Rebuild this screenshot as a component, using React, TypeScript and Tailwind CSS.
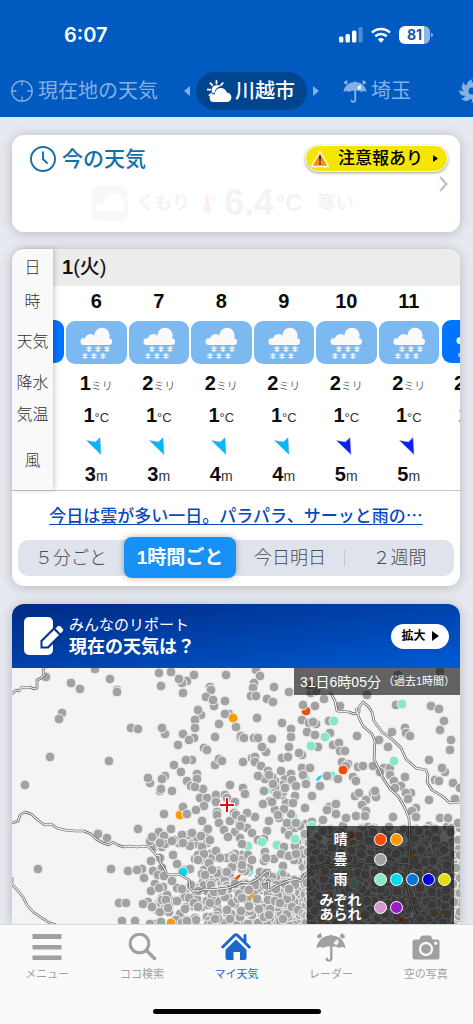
import type { ReactNode } from "react";

type IconProps = { className?: string };

type HourData = {
  hour: number;
  rain: number;
  temp: number;
  wind: number;
};

const hours: HourData[] = [
  { hour: 6, rain: 1, temp: 1, wind: 3 },
  { hour: 7, rain: 2, temp: 1, wind: 3 },
  { hour: 8, rain: 2, temp: 1, wind: 4 },
  { hour: 9, rain: 2, temp: 1, wind: 4 },
  { hour: 10, rain: 2, temp: 1, wind: 5 },
  { hour: 11, rain: 2, temp: 1, wind: 5 },
];

const legend = [
  { label: ["晴"], colors: ["#f24c00", "#ff9900"], row: "h-5" },
  { label: ["曇"], colors: ["#a2a2a2"], row: "h-5" },
  {
    label: ["雨"],
    colors: ["#86e8c9", "#00d8ee", "#0078d7", "#0000d2", "#e0e000"],
    row: "h-5",
  },
  { label: ["みぞれ", "あられ"], colors: ["#d895d2", "#9a1cc8"], row: "h-9" },
];

/* ---------- icons ---------- */

function TargetIcon({ className }: IconProps) {
  return (
    <svg viewBox="0 0 22 22" className={className} fill="none" stroke="currentColor" strokeWidth="1.3" aria-hidden="true">
      <circle cx="11" cy="11" r="10.2" />
      <path d="M11 1v4.5M11 16.5V21M1 11h4.5M16.5 11H21" />
    </svg>
  );
}

function SunCloudIcon({ className }: IconProps) {
  return (
    <svg viewBox="0 0 25 22" className={className} fill="currentColor" aria-hidden="true">
      <path
        d="M9.5 .8v2.8M3.4 3.2l1.8 2M.6 9.6h2.7M2.4 15.4l1.8-1.6M15.8 3.2l-1.8 2"
        stroke="currentColor"
        strokeWidth="1.8"
        strokeLinecap="round"
      />
      <path d="M9.4 5.2a4.9 4.9 0 0 0-3.6 8.2l2-.9c.2-3.2 2.6-5.7 5.9-6A4.8 4.8 0 0 0 9.4 5.2z" />
      <path d="M6.3 22a4 4 0 0 1-.4-7.9c.7.1 1.2.2 1.8.5.3-3.9 2.6-6.6 6.2-6.600 3 0 5.200 1.700 5.900 4.600 2.700.2 4.600 2.200 4.600 4.800 0 2.600-2 4.600-4.600 4.600z" />
    </svg>
  );
}

function UmbrellaIcon({ className }: IconProps) {
  return (
    <svg viewBox="0 0 30 29" className={className} fill="currentColor" aria-hidden="true">
      <path d="M.6 15.4C1.2 8.500 6 3.400 13.800 2.600L15 1.200l1.200 1.400C24 3.400 28.800 8.500 29.400 15.400c-2-1.800-4.600-1.900-6.600-.4-1.600-1.300-4.200-1.800-6.300-1.300v11.500c0 4.600-6.700 4.800-7 .3 0-1.300 2.200-1.300 2.300 0 .2 1.700 2.300 1.500 2.300-.3V13.700c-2.400-.5-5 0-6.900 1.300-2-1.500-4.600-1.400-6.600.4z" />
      <path d="M4.800 0c1.400 2.500 1.400 5-.8 5.400C1.600 5.800.2 3.600 1.700 2 2.400 1.200 3.800 1 4.800 0zM25.200 0c-1.400 2.500-1.400 5 .8 5.400 2.400.4 3.800-1.800 2.300-3.400-.7-.8-2.100-1-3.100-2z" />
      <path d="M21.600 6c1.500 2.600 1.300 5.600-1 6-2.200.3-3.400-1.700-2.200-3.400.8-1 2.200-1.100 3.200-2.600z" fill="#fff" fillOpacity=".85" />
    </svg>
  );
}

function TyphoonIcon({ className }: IconProps) {
  return (
    <svg viewBox="0 0 26 24" className={className} aria-hidden="true">
      <circle cx="13" cy="12" r="6" fill="none" stroke="currentColor" strokeWidth="5" />
      <g fill="currentColor">
        <path d="M8 6C8 3 10 1 14 0c-1 1-1.500 2.200-1 4z" />
        <path d="M4 12C2 9 2.500 6 5 3c-.2 1.500.3 2.500 2 3.500z" />
        <path d="M6 17C2 17 .3 14 0 11c1.200 1 2.500 1.400 4.500.8z" />
        <path d="M11 20.500C8 23 4.500 22 2 19.500c1.700.1 3-.5 4-2.500z" />
        <path d="M18 18c0 3-2 5-6 6 1-1 1.500-2.200 1-4z" />
        <path d="M22 12c2 3 1.500 6-1 9 .2-1.500-.3-2.500-2-3.500z" />
        <path d="M20 7c4 0 5.700 3 6 6-1.200-1-2.500-1.400-4.500-.8z" />
        <path d="M15 3.500c3-2.500 6.500-1.500 9 1-1.700-.1-3 .5-4 2.500z" />
      </g>
    </svg>
  );
}

function StatusIcons() {
  return (
    <div className="flex items-center gap-2 text-white">
      <svg viewBox="0 0 24 16" className="h-4 w-6" fill="currentColor" aria-hidden="true">
        <rect x="0" y="9.5" width="4.4" height="6" rx="1.5" />
        <rect x="6.5" y="7" width="4.4" height="8.5" rx="1.5" />
        <rect x="13" y="3.5" width="4.4" height="12" rx="1.5" />
        <rect x="19.5" y="0" width="4.2" height="15.5" rx="1.5" opacity=".3" />
      </svg>
      <svg viewBox="0 0 20 16" className="h-4 w-5" fill="none" stroke="currentColor" strokeWidth="2.6" aria-hidden="true">
        <path d="M1 5.600a13 13 0 0 1 18 0" />
        <path d="M4.300 9.300a8.200 8.200 0 0 1 11.400 0" />
        <path d="M10 15.800l-3.200-3.400a4.800 4.800 0 0 1 6.400 0z" fill="currentColor" stroke="none" />
      </svg>
      <div className="flex items-center">
        <div className="flex h-[18px] w-[31px] items-center justify-center rounded-md bg-linear-to-r from-white from-80% to-[#8fb5e3] to-80% font-['Inter',sans-serif] text-[14px] leading-none font-bold text-[#1558ae]">
          81
        </div>
        <div className="ml-px h-1 w-0.5 rounded-r bg-[#8fb5e3]" />
      </div>
    </div>
  );
}

function ClockIcon({ className }: IconProps) {
  return (
    <svg viewBox="0 0 26 26" className={className} fill="none" stroke="currentColor" strokeWidth="1.9" aria-hidden="true">
      <circle cx="13" cy="13" r="12" />
      <path d="M13 5.500V13l4.600 4.600" />
    </svg>
  );
}

function SnowCloudIcon({ className }: IconProps) {
  const flakes = [
    [23, 28],
    [32, 28],
    [41, 28],
    [19, 35],
    [28, 35],
    [37, 35],
  ];
  return (
    <svg viewBox="0 0 60 43" className={className} aria-hidden="true">
      <g fill="#fafafa">
        <rect x="14.500" y="17.300" width="31.500" height="6.700" rx="3.300" />
        <circle cx="24.500" cy="18.500" r="5.500" />
        <circle cx="36" cy="14.500" r="7.700" />
        <path d="M24 13l8 5v4h-8z" />
      </g>
      <g stroke="#fafafa" strokeWidth="1.300">
        {flakes.map(([x, y]) => (
          <path
            key={`${x}-${y}`}
            transform={`translate(${x} ${y})`}
            d="M0-3V3M-2.600-1.500L2.600 1.500M2.600-1.500L-2.600 1.500"
          />
        ))}
      </g>
    </svg>
  );
}

function WindArrow({ strong }: { strong: boolean }) {
  return (
    <svg viewBox="0 0 16 18" className="mr-1 h-[18px] w-4 shrink-0" aria-hidden="true">
      <path
        d="M15 17.500L.5 3.500l9 1.500L14 .5z"
        fill={strong ? "#0a1eff" : "#00b8ff"}
        stroke="#999"
        strokeWidth=".4"
      />
    </svg>
  );
}

function ReportIcon({ className }: IconProps) {
  return (
    <svg viewBox="0 0 40 38" className={className} aria-hidden="true">
      <rect x="0" y="0" width="29" height="38" rx="5" fill="#fff" />
      <path d="M16.500 31.500v-8L33 7l8 8-16.500 16.500z" fill="#003193" />
      <path d="M18.500 29.500v-5L30 13l5 5-11.500 11.500z" fill="#fff" />
      <path d="M31.500 11.500l2-2c1-1 2-1 3 0l2 2c1 1 1 2 0 3l-2 2z" fill="#fff" />
    </svg>
  );
}

function Triangle({ className }: IconProps) {
  return (
    <svg viewBox="0 0 6 10" preserveAspectRatio="none" className={className} fill="currentColor" aria-hidden="true">
      <path d="M0 0l6 5-6 5z" />
    </svg>
  );
}

/* ---------- report map ---------- */

const cloudy: number[][] = [
  [83, 1], [34, 9], [59, 15], [68, 21], [98, 11], [105, 22], [105, 24], [50, 45], [47, 51], [38, 89],
  [97, 93], [13, 117], [119, 60], [126, 61], [147, 5], [159, 4], [149, 18], [171, 25], [175, 13], [170, 15],
  [167, 11], [182, 7], [214, 7], [198, 19], [199, 22], [194, 29], [202, 38], [201, 32], [213, 33], [189, 47],
  [186, 42], [183, 52], [183, 60], [217, 46], [213, 46], [207, 56], [224, 59], [153, 66], [150, 60], [171, 66],
  [182, 70], [177, 72], [166, 77], [203, 69], [228, 69], [192, 80], [195, 82], [180, 92], [174, 92], [203, 97],
  [207, 91], [210, 93], [162, 97], [169, 104], [138, 115], [136, 110], [153, 108], [150, 111], [185, 106], [175, 113],
  [185, 111], [148, 123], [149, 121], [160, 123], [179, 118], [191, 121], [183, 119], [218, 117], [188, 130], [195, 130],
  [204, 127], [213, 127], [215, 130], [192, 138], [184, 142], [204, 134], [223, 134], [171, 139], [175, 146], [152, 146],
  [205, 144], [205, 147], [222, 145], [190, 153], [207, 155], [218, 153], [194, 164], [196, 161], [212, 162], [223, 164],
  [126, 161], [86, 166], [95, 170], [159, 161], [147, 164], [138, 173], [140, 169], [152, 168], [150, 179], [153, 176],
  [148, 175], [160, 173], [170, 167], [185, 169], [180, 165], [189, 168], [198, 172], [178, 178], [171, 175], [190, 179],
  [216, 169], [228, 170], [161, 187], [148, 190], [139, 193], [165, 196], [183, 191], [186, 187], [192, 186], [204, 183],
  [186, 192], [215, 190], [208, 190], [221, 190], [197, 195], [205, 205], [200, 202], [193, 207], [178, 201], [215, 204],
  [26, 201], [99, 201], [116, 203], [130, 201], [125, 202], [132, 210], [141, 203], [146, 207], [152, 208], [160, 213],
  [139, 223], [151, 219], [147, 220], [170, 221], [107, 235], [114, 235], [136, 234], [131, 236], [140, 239], [150, 232],
  [154, 232], [165, 233], [156, 240], [110, 253], [123, 253], [149, 254], [138, 256],
  [244, 2], [248, 8], [242, 15], [241, 20], [239, 28], [244, 28], [262, 19], [255, 31], [261, 34], [277, 24],
  [291, 37], [303, 38], [312, 31], [299, 25], [304, 23], [298, 18], [328, 38], [245, 50], [270, 55], [279, 61],
  [290, 52], [297, 55], [304, 56], [301, 54], [317, 53], [345, 68], [229, 68], [232, 70], [242, 70], [246, 70],
  [260, 71], [254, 84], [250, 79], [279, 69], [277, 79], [290, 87], [287, 85], [295, 64], [303, 67], [306, 79],
  [318, 65], [321, 77], [327, 75], [328, 83], [333, 83], [270, 90], [276, 89], [231, 94], [240, 90], [243, 89],
  [243, 94], [249, 98], [256, 103], [269, 103], [260, 109], [253, 111], [257, 107], [246, 108], [290, 100], [298, 100],
  [291, 107], [294, 116], [308, 118], [315, 108], [326, 111], [330, 94], [336, 96], [334, 98], [346, 99], [351, 98],
  [361, 98], [341, 109], [344, 113], [355, 27], [384, 37], [419, 38], [427, 41], [432, 53], [428, 62], [439, 72],
  [438, 82], [380, 64], [393, 60], [394, 65], [398, 68], [367, 72], [376, 79], [417, 92], [433, 104], [430, 100],
  [423, 112], [427, 113], [441, 115], [448, 120], [393, 109], [417, 132], [443, 131], [372, 100], [378, 100], [368, 104],
  [378, 107], [382, 113], [389, 118], [383, 120], [399, 125], [394, 125], [231, 120], [233, 126], [252, 123], [263, 119],
  [261, 116], [273, 120], [265, 127], [283, 128], [300, 128], [343, 128], [347, 125], [361, 125], [364, 129], [363, 123],
  [354, 132], [317, 139], [315, 142], [324, 136], [324, 146], [251, 136], [260, 134], [272, 141], [281, 135], [293, 140],
  [266, 147], [350, 137], [344, 148], [354, 143], [353, 148], [381, 149], [404, 140], [400, 143], [404, 149], [428, 150],
  [436, 150], [446, 155], [243, 149], [235, 145], [224, 147], [230, 151], [235, 160], [275, 155], [284, 155], [300, 154],
  [311, 152], [280, 112], [284, 118], [386, 7], [428, 4], [334, 150], [396, 131], [240, 165], [246, 172], [228, 158],
  [253, 184], [254, 190], [269, 186], [283, 178], [277, 188], [284, 186], [230, 176], [222, 190], [240, 192],
];

// x, y, width, height, count
const clusters: number[][] = [
  [136, 166, 60, 40, 16],
  [140, 214, 70, 44, 60],
  [190, 186, 110, 30, 55],
  [195, 212, 105, 46, 240],
  [252, 100, 28, 72, 20],
  [270, 152, 28, 36, 20],
  [300, 158, 148, 30, 140],
  [292, 180, 160, 78, 620],
];

const colored: { x: number; y: number; fill: string }[] = [
  { x: 221, y: 50, fill: "#ff9900" },
  { x: 171, y: 204, fill: "#00d8ee" },
  { x: 159, y: 255, fill: "#ff9900" },
  { x: 322, y: 53, fill: "#86e8c9" },
  { x: 313, y: 69, fill: "#86e8c9" },
  { x: 299, y: 78, fill: "#86e8c9" },
  { x: 331, y: 102, fill: "#f24c00" },
  { x: 390, y: 36, fill: "#86e8c9" },
  { x: 382, y: 93, fill: "#86e8c9" },
  { x: 250, y: 174, fill: "#86e8c9" },
  { x: 283, y: 171, fill: "#86e8c9" },
  { x: 300, y: 158, fill: "#86e8c9" },
  { x: 342, y: 216, fill: "#86e8c9" },
];

// reports mostly hidden under their neighbours
const covered: { x: number; y: number; fill: string }[] = [
  { x: 168, y: 147, fill: "#ff9900" },
  { x: 294, y: 43, fill: "#f24c00" },
  { x: 293, y: 110, fill: "#86e8c9" },
  { x: 261, y: 122, fill: "#86e8c9" },
  { x: 320, y: 108, fill: "#86e8c9" },
  { x: 226, y: 152, fill: "#86e8c9" },
  { x: 281, y: 149, fill: "#86e8c9" },
  { x: 236, y: 178, fill: "#86e8c9" },
  { x: 265, y: 177, fill: "#86e8c9" },
  { x: 295, y: 160, fill: "#f24c00" },
];

// small slivers still visible between the grey dots
const slivers: { x: number; y: number; fill: string }[] = [
  { x: 307, y: 110, fill: "#00d8ee" },
  { x: 226, y: 209, fill: "#f24c00" },
  { x: 240, y: 228, fill: "#ff9900" },
  { x: 267, y: 204, fill: "#86e8c9" },
  { x: 239, y: 206, fill: "#86e8c9" },
  { x: 340, y: 168, fill: "#f24c00" },
  { x: 400, y: 187, fill: "#ff9900" },
  { x: 388, y: 190, fill: "#86e8c9" },
  { x: 430, y: 244, fill: "#ff9900" },
  { x: 389, y: 252, fill: "#f24c00" },
  { x: 309, y: 254, fill: "#ff9900" },
];

const borders = [
  "M0 26l4-4 3 1 3-4 4 1 4-1 4 2 3-1v-8l4-2 3-3-1-5 2-3",
  "M0 155l6-2 2-6 5-3 6 2 8 7 6 4 6-1 6 4 8 2 10 1 9 0 7 3 5 5 7 4 6 2 4-3 5 3 6 2 5-1 8 1 6-1 6 1 4 4 3 4 4 1 0 6 4 6 3 6 6 1 6-1 5 3 5 3 1 8 3 3 6 0 5-2 8 1 7-1 9-1 8-3 6-3 8 1 8-4 6-6 5-3 1 5-7 8 6-2-1 10 10-6 10-4 8-2 5 2 4-7 9-6 12-4 10 3 14 1 10-6 12 2 12-4 14 3 12 1 12 4",
  "M0 209l0 7 6 7 5 6 4 8 6 7 9 6 8 5 9 3",
  "M318 24l5 9 2 10 12 1 5 2 5-2 0-5 4-5 5 4 4 6 2 9 8 11 11 8 8 8 5 11 10 9 10 2 2 5-1 7 5 8 10 6 8 7 10-1",
  "M344 40l3 10 4 8 9 8 3 7-1 18 4 8 5 11 7 11 8 7 6 10 5 12 1 26-2 24-1 16 4 16 6 18 8 14",
];

function scatter() {
  let seed = 607;
  const next = () => {
    seed = (seed * 1103515245 + 12345) % 2147483648;
    return seed / 2147483648;
  };
  return clusters.flatMap(([x, y, w, h, count]) =>
    Array.from({ length: count }, () => [
      Math.round(x + next() * w),
      Math.round(y + next() * h),
    ]),
  );
}

const scattered = scatter();

function Dot({ x, y, fill = "#a2a2a2" }: { x: number; y: number; fill?: string }) {
  return <circle cx={x} cy={y} r="4.900" fill={fill} stroke="#f2f2f2" strokeWidth="1" />;
}

function ReportMap() {
  return (
    <svg
      viewBox="0 0 448 256"
      preserveAspectRatio="xMidYMin slice"
      className="absolute inset-0 h-full w-full bg-[#f4f4f4]"
      role="img"
      aria-label="現在の天気の地図"
    >
      {covered.map((d) => (
        <Dot key={`${d.x}-${d.y}`} {...d} />
      ))}
      {scattered.map(([x, y], i) => (
        <Dot key={i} x={x} y={y} />
      ))}
      {cloudy.map(([x, y], i) => (
        <Dot key={i} x={x} y={y} />
      ))}
      {colored.map((d) => (
        <Dot key={`${d.x}-${d.y}`} {...d} />
      ))}
      {slivers.map((d) => (
        <path key={`${d.x}-${d.y}`} d="M-3 2C-2-1 0-2 3-3 2 0 1 2-2 3z" transform={`translate(${d.x} ${d.y})`} fill={d.fill} />
      ))}
      <g fill="none" strokeLinejoin="round">
        {borders.map((d) => (
          <path key={d} d={d} stroke="#5a5a5a" strokeWidth="2.600" />
        ))}
        {borders.map((d) => (
          <path key={d} d={d} stroke="#ededed" strokeWidth="1.300" />
        ))}
      </g>
      <path d="M215 129v16M207 137h16" stroke="#fff" strokeWidth="4" />
      <path d="M215 130v14M208 137h14" stroke="#f5001d" strokeWidth="2" />
    </svg>
  );
}

/* ---------- sections ---------- */

function Header() {
  return (
    <header className="h-[117px] shrink-0 overflow-hidden bg-[#005ac0]">
      <div className="flex h-[70px] items-center justify-between pr-10 pl-16">
        <span className="font-['Inter',sans-serif] text-[20px] leading-none font-semibold text-white">
          6:07
        </span>
        <StatusIcons />
      </div>
      <nav className="flex h-[42px] items-center text-[20px] leading-none whitespace-nowrap text-[#86b0e2]">
        <a href="#here" className="ml-[11px] flex shrink-0 items-center gap-[5px]">
          <TargetIcon className="size-[22px]" />
          現在地の天気
        </a>
        <Triangle className="ml-[26px] h-2.5 w-1.5 shrink-0 rotate-180" />
        <a
          href="#kawagoe"
          aria-current="page"
          className="ml-1.5 flex h-[38px] shrink-0 items-center gap-[3px] rounded-full bg-[#02458f] pr-3 pl-[11px] font-medium text-white"
        >
          <SunCloudIcon className="h-[22px] w-[25px]" />
          川越市
        </a>
        <Triangle className="ml-1.5 h-2.5 w-1.5 shrink-0" />
        <a href="#saitama" className="ml-6 flex shrink-0 items-center gap-1">
          <UmbrellaIcon className="h-[23px] w-6" />
          埼玉
        </a>
        <a href="#typhoon" aria-label="台風" className="ml-12 shrink-0">
          <TyphoonIcon className="h-6 w-[26px]" />
        </a>
      </nav>
    </header>
  );
}

function Card({ className, children }: { className?: string; children: ReactNode }) {
  return (
    <section className={`rounded-xl bg-white shadow-[0_1px_12px_rgba(0,0,0,0.22)] ${className ?? ""}`}>
      {children}
    </section>
  );
}

function CurrentWeather() {
  return (
    <Card className="h-[97px] shrink-0 pt-2.5 pr-3 pl-[18px]">
      <div className="flex items-start justify-between">
        <h2 className="flex items-center gap-1.5 text-[21px] leading-7 font-medium text-[#1470ab]">
          <ClockIcon className="size-[26px]" />
          今の天気
        </h2>
        <button className="flex h-[27px] w-[143px] items-center rounded-full border border-white bg-[#f5e600] pl-1 text-[17px] leading-none font-medium text-black shadow-[0_1px_3px_rgba(0,0,0,0.4)]">
          <svg viewBox="0 0 20 18" className="h-[18px] w-5" aria-hidden="true">
            <path d="M10 1.500L18.500 16.500h-17z" fill="#ff8c0f" stroke="#fff" strokeWidth="1.500" strokeLinejoin="round" />
            <path d="M9 6h2l-.4 5.500H9.400zM9.100 12.800h1.800v1.700H9.100z" fill="#222" />
          </svg>
          <span className="ml-2">注意報あり</span>
          <Triangle className="ml-2.5 h-[7px] w-[5px]" />
        </button>
      </div>
      <div className="flex items-start">
        <div className="mt-3 flex flex-1 items-center pl-[62px] text-[18px] leading-9 font-bold text-[#f3f3f3]">
          <svg viewBox="0 0 36 36" className="size-9" aria-hidden="true">
            <rect width="36" height="36" rx="8" fill="#f8f8f8" />
            <path d="M6 26a3.500 3.500 0 0 1-1-6c4-.5 7-2 8-4 1-5 4-8 8.500-8 5 0 8.500 4 8 9 1 2 3 3 3 6 0 2-1 3-3 3z" fill="#fff" />
          </svg>
          <span className="ml-2">くもり</span>
          <svg viewBox="0 0 14 18" className="ml-3 h-[18px] w-3.5" aria-hidden="true">
            <path d="M3 3a2 2 0 0 1 4 0v8a4 4 0 1 1-4 0z" fill="#fdeeee" />
            <path d="M9 3h5M9 6h4M9 9h5" stroke="#fdeeee" />
          </svg>
          <span className="ml-2 text-[36px]">6.4</span>
          <span className="ml-0.5 text-[23px]">°C</span>
          <span className="ml-4">寒い</span>
        </div>
        <svg viewBox="0 0 9 16" className="mt-[3px] h-4 w-[9px]" fill="none" stroke="#c2c2c6" strokeWidth="2.200" aria-hidden="true">
          <path d="M1 1l6.500 7L1 15" />
        </svg>
      </div>
    </Card>
  );
}

function RowLabels() {
  return (
    <div className="relative z-10 flex w-[41px] shrink-0 flex-col rounded-tl-xl bg-[#f9f9f9] text-center text-[16px] font-light text-[#333] shadow-[2px_0_5px_rgba(0,0,0,0.18)]">
      <span className="leading-[37px]">日</span>
      <span className="leading-[31px]">時</span>
      <span className="leading-[50px]">天気</span>
      <span className="leading-[32px]">降水</span>
      <span className="leading-[32px]">気温</span>
      <span className="leading-[59px]">風</span>
    </div>
  );
}

function HourColumn({ data }: { data: HourData }) {
  return (
    <div className="flex min-w-0 flex-1 flex-col items-center text-[20px] font-bold text-[#0c0c0c]">
      <span className="leading-[31px]">{data.hour}</span>
      <div className="flex h-[50px] w-full items-center px-px">
        <div className="flex h-[43px] w-full justify-center rounded-[9px] bg-[#7cb9f1]">
          <SnowCloudIcon className="h-[43px] w-[60px]" />
        </div>
      </div>
      <span className="flex h-8 items-baseline leading-8">
        {data.rain}
        <small className="text-[11px] font-light">ミリ</small>
      </span>
      <span className="flex h-8 items-baseline leading-8">
        {data.temp}
        <small className="text-[13px] font-normal text-[#333]">°C</small>
      </span>
      <div className="flex h-[59px] flex-col items-center pt-1.5">
        <WindArrow strong={data.wind >= 5} />
        <span className="flex shrink-0 items-baseline leading-[38px]">
          {data.wind}
          <small className="text-[14px] font-normal text-[#333]">m</small>
        </span>
      </div>
    </div>
  );
}

function Forecast() {
  return (
    <Card className="mt-[17px] shrink-0 pb-1.5">
      <div className="flex border-b border-[#c6c6c6]">
        <RowLabels />
        <div className="min-w-0 flex-1 overflow-hidden rounded-tr-xl">
          <h3 className="bg-[#ececec] pl-[9px] text-[20px] leading-[37px] font-bold text-[#111]">
            1<span className="font-medium">(火)</span>
          </h3>
          <div className="flex">
            <div className="w-3 shrink-0 pt-[34px]">
              <div className="mr-px h-[43px] rounded-r-[9px] bg-[#0073ff]" />
            </div>
            {hours.map((data) => (
              <HourColumn key={data.hour} data={data} />
            ))}
            <div className="w-5 shrink-0 overflow-hidden pt-[34px] pl-0.5 text-[20px] font-bold whitespace-nowrap">
              <div className="h-[43px] w-[60px] rounded-l-[9px] bg-[#0073ff]">
                <SnowCloudIcon className="h-[43px] w-[60px]" />
              </div>
              <p className="mt-1 pl-3 leading-8">2</p>
              <p className="pl-4 leading-8 font-normal text-[#999]">2</p>
            </div>
          </div>
        </div>
      </div>
      <a
        href="#comment"
        className="mt-2 block text-center font-['Noto_Sans_CJK_JP',sans-serif] text-[17px] leading-8 font-medium text-[#0b49bb] underline underline-offset-2"
      >
        今日は雲が多い一日。パラパラ、サーッと雨の…
      </a>
      <div className="mx-1.5 mt-1.5 mb-0.5 flex h-[41px] items-center">
        <div className="flex h-9 w-full items-center rounded-[10px] bg-[#dfe3eb] text-[18px] leading-none whitespace-nowrap text-[#4c4c4c]">
          <button className="flex-[106] font-light">５分ごと</button>
          <button className="h-[41px] flex-[112] rounded-lg bg-[#1791f5] text-[19px] font-bold text-white shadow-[0_0_6px_rgba(0,0,0,0.3)]">
            1時間ごと
          </button>
          <button className="flex-[108] font-light">今日明日</button>
          <div className="h-4 w-px bg-[#c3c7cf]" />
          <button className="flex-[109] font-light">２週間</button>
        </div>
      </div>
    </Card>
  );
}

function MapLegend() {
  return (
    <div className="absolute top-[158px] right-1.5 bottom-0 w-[147px] overflow-hidden bg-black/65 pt-[3px] text-white">
      {legend.map((item) => (
        <div key={item.label[0]} className={`flex items-center ${item.row}`}>
          <div className="w-[67px] pb-px text-center text-[14px] leading-[14px] font-bold">
            {item.label.map((line) => (
              <div key={line}>{line}</div>
            ))}
          </div>
          <div className="flex gap-[3px]">
            {item.colors.map((color) => (
              <span
                key={color}
                className="size-[13px] rounded-full border border-white"
                style={{ backgroundColor: color }}
              />
            ))}
          </div>
        </div>
      ))}
    </div>
  );
}

function Reports() {
  return (
    <Card className="mt-[18px] flex min-h-0 flex-1 flex-col overflow-hidden rounded-b-none">
      <div className="flex h-16 shrink-0 items-center bg-linear-to-br from-[#002a85] to-[#005bd3] pr-[11px] pl-3 text-white">
        <ReportIcon className="h-[38px] w-10" />
        <h2 className="ml-[5px] flex-1">
          <span className="block text-[15px] leading-[22px] font-normal">みんなのリポート</span>
          <span className="block text-[18px] leading-[22px] font-bold">現在の天気は？</span>
        </h2>
        <button className="flex h-[25px] w-[58px] items-center justify-center gap-1.5 rounded-full bg-white text-[12px] leading-none font-bold text-black">
          拡大
          <Triangle className="h-2.5 w-[7px]" />
        </button>
      </div>
      <div className="relative min-h-0 flex-1">
        <ReportMap />
        <p className="absolute top-0 right-0 flex h-[27px] w-[166px] items-center bg-black/60 pl-1.5 text-[14px] leading-none whitespace-nowrap text-white">
          31日6時05分<small className="ml-0.5 text-[11px]">（過去1時間）</small>
        </p>
        <MapLegend />
      </div>
    </Card>
  );
}

const navItems = [
  {
    label: "メニュー",
    icon: (
      <svg viewBox="0 0 30 28" className="h-7 w-[30px]" fill="currentColor" aria-hidden="true">
        <path d="M.5 1h29v5H.5zM.5 12h29v4.500H.5zM.5 22.500h29V27H.5z" />
      </svg>
    ),
  },
  {
    label: "ココ検索",
    icon: (
      <svg viewBox="0 0 30 28" className="h-7 w-[30px]" fill="none" stroke="currentColor" aria-hidden="true">
        <circle cx="12.500" cy="10.500" r="9.300" strokeWidth="3" />
        <path d="M19.500 17.500l8 8" strokeWidth="3.600" strokeLinecap="round" />
      </svg>
    ),
  },
  {
    label: "マイ天気",
    active: true,
    icon: (
      <svg viewBox="0 0 30 28" className="h-7 w-[30px]" aria-hidden="true">
        <path
          d="M1.700 14L13.500 2.400q1.500-1.300 3 0L28.300 14M24 2.500v7"
          fill="none"
          stroke="currentColor"
          strokeWidth="2.900"
          strokeLinecap="round"
        />
        <path d="M15 6.500l10.500 10.200V25q0 2-2 2H19v-8h-6.500v8H6.500q-2 0-2-2v-8.300z" fill="currentColor" />
      </svg>
    ),
  },
  { label: "レーダー", icon: <UmbrellaIcon className="h-[29px] w-[30px]" /> },
  {
    label: "空の写真",
    icon: (
      <svg viewBox="0 0 30 28" className="h-7 w-[30px]" aria-hidden="true">
        <path
          d="M8.500 6.500l1-2.500q.5-1.500 2-1.500h7q1.500 0 2 1.500l1 2.500H26q2.500 0 2.500 2.500v15q0 2.500-2.500 2.500H4q-2.500 0-2.500-2.500V9q0-2.500 2.500-2.500z"
          fill="currentColor"
        />
        <circle cx="15" cy="16" r="6" fill="none" stroke="#fafafa" strokeWidth="2.300" />
        <circle cx="24.700" cy="10.300" r="1.700" fill="#fafafa" />
      </svg>
    ),
  },
];

function BottomNav() {
  return (
    <footer className="relative z-20 h-[100px] shrink-0 border-t border-[#d8d8da] bg-[#fafafa]">
      <nav className="flex pt-2">
        {navItems.map(({ label, icon, active }) => (
          <a
            key={label}
            href={`#${label}`}
            aria-current={active ? "page" : undefined}
            className={`flex flex-1 flex-col items-center text-[11px] leading-4 ${
              active ? "text-[#1b67ca]" : "text-[#a0a0a0]"
            }`}
          >
            <span className="flex h-[33px] items-start">{icon}</span>
            {label}
          </a>
        ))}
      </nav>
      <div className="mx-auto mt-[27px] h-[5px] w-[168px] rounded-full bg-black" />
    </footer>
  );
}

export default function App() {
  return (
    <div
      lang="ja"
      className="flex h-dvh flex-col overflow-hidden bg-[#e6e9ef] font-['Liberation_Sans','Noto_Sans_CJK_JP',sans-serif]"
    >
      <Header />
      <main className="flex min-h-0 flex-1 flex-col pt-[18px] pr-[13px] pl-3">
        <CurrentWeather />
        <Forecast />
        <Reports />
      </main>
      <BottomNav />
    </div>
  );
}
